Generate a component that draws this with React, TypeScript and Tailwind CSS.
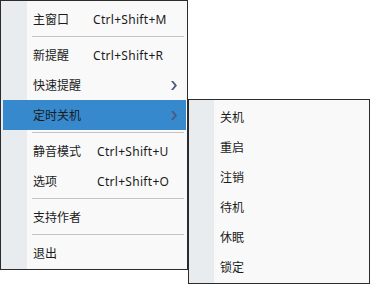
const FONT = "[font-family:'Noto_Sans','Noto_Sans_CJK_SC',sans-serif]";

type Item =
  | { kind: "sep" }
  | { kind: "item"; label: string; shortcut?: string; labelW?: string; sub?: boolean; active?: boolean };

const MAIN: Item[] = [
  { kind: "item", label: "主窗口", shortcut: "Ctrl+Shift+M", labelW: "w-[60px]" },
  { kind: "sep" },
  { kind: "item", label: "新提醒", shortcut: "Ctrl+Shift+R", labelW: "w-[60px]" },
  { kind: "item", label: "快速提醒", sub: true },
  { kind: "item", label: "定时关机", sub: true, active: true },
  { kind: "sep" },
  { kind: "item", label: "静音模式", shortcut: "Ctrl+Shift+U", labelW: "w-[64px]" },
  { kind: "item", label: "选项", shortcut: "Ctrl+Shift+O", labelW: "w-[64px]" },
  { kind: "sep" },
  { kind: "item", label: "支持作者" },
  { kind: "sep" },
  { kind: "item", label: "退出" },
];

const SUB = ["关机", "重启", "注销", "待机", "休眠", "锁定"];

function Chevron() {
  return (
    <svg width="6" height="9" viewBox="0 0 6 9" className="shrink-0">
      <polygon points="0,0 2.2,0 6,4.5 2.2,9 0,9 3.6,4.5" fill="#4b5a7e" />
    </svg>
  );
}

export default function App() {
  return (
    <div className={`flex items-start bg-white w-[376px] h-[286px] text-[12px] text-[#1b1b1b] ${FONT}`}>
      <div className="w-[188px] h-[270px] border border-[#2b2b2b] bg-[linear-gradient(to_right,#e8ecef_26px,#f9f9f9_26px)] pt-[3px]">
        {MAIN.map((it, i) =>
          it.kind === "sep" ? (
            <div key={i} className="h-[6px] pt-[2px] ml-[31px] mr-[3px]">
              <div className="h-px bg-[#c4c4c4]" />
            </div>
          ) : (
            <div
              key={i}
              className={`h-[30px] ml-[2px] mr-[1px] pl-[30px] pr-[9px] pt-px flex items-center ${it.active ? "bg-[#3689cd]" : ""}`}
            >
              <span className={`shrink-0 ${it.labelW ?? ""}`}>{it.label}</span>
              {it.shortcut && <span className="tracking-[0.3px]">{it.shortcut}</span>}
              {it.sub && (
                <span className="ml-auto flex">
                  <Chevron />
                </span>
              )}
            </div>
          )
        )}
      </div>
      <div className="mt-[99px] w-[182px] h-[185px] border border-[#2b2b2b] bg-[linear-gradient(to_right,#e8ecef_25px,#f9f9f9_25px)] pt-[2px]">
        {SUB.map((s) => (
          <div key={s} className="h-[30px] pl-[31px] pt-px flex items-center">
            {s}
          </div>
        ))}
      </div>
    </div>
  );
}
